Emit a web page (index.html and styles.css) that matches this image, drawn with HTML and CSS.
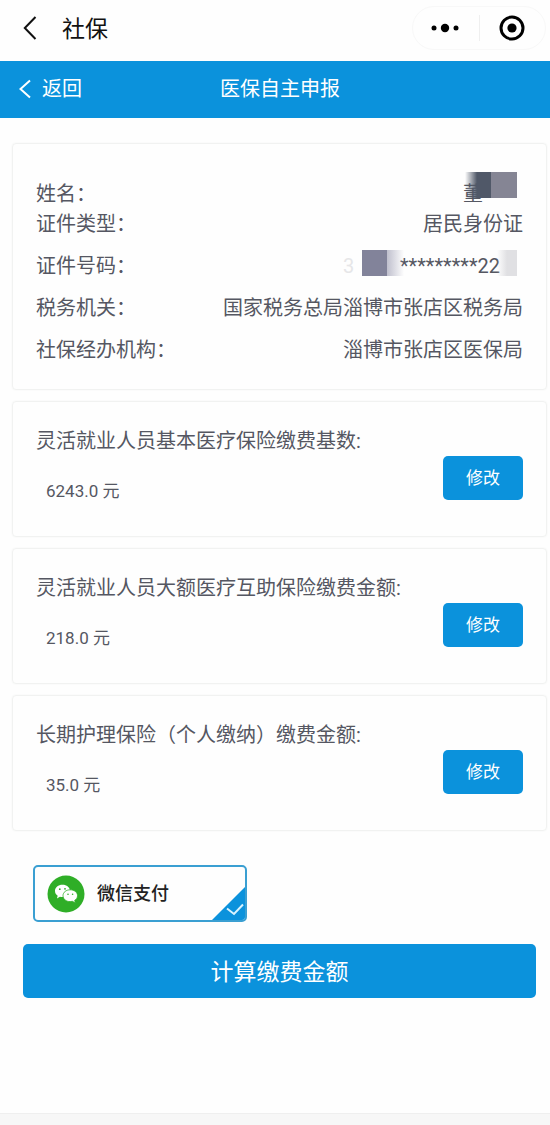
FILE: index.html
```html
<!DOCTYPE html>
<html lang="zh-CN">
<head>
    <meta charset="UTF-8">
    <meta name="viewport" content="width=device-width, initial-scale=1.0">
    <title>医保自主申报</title>
    <link rel="stylesheet" href="styles.css">
</head>
<body>
    <header class="app-bar">
        <button type="button" class="app-back" aria-label="关闭">
            <svg width="14" height="24" viewBox="0 0 14 24"><path d="M12.500 1 L1.800 12 L12.500 23" /></svg>
        </button>
        <h1>社保</h1>
        <div class="capsule">
            <button type="button" aria-label="更多">
                <svg width="28" height="10" viewBox="0 0 28 10">
                    <circle cx="3" cy="5" r="2.500" /><circle cx="14" cy="5" r="4.200" /><circle cx="25" cy="5" r="2.500" />
                </svg>
            </button>
            <span class="capsule-line"></span>
            <button type="button" aria-label="退出">
                <svg width="26" height="26" viewBox="0 0 26 26">
                    <circle class="ring" cx="13" cy="13" r="11" /><circle cx="13" cy="13" r="4.600" />
                </svg>
            </button>
        </div>
    </header>

    <nav class="nav-bar">
        <a href="#" class="nav-back">
            <svg width="12" height="20" viewBox="0 0 12 20"><path d="M11 1.500 L1.500 10 L11 18.500" /></svg>
            返回
        </a>
        <h2>医保自主申报</h2>
    </nav>

    <main>
        <dl class="card info">
            <div class="info-row name-row">
                <dt>姓名：</dt>
                <dd class="masked-name">
                    <span>董</span>
                    <span class="mask mask-name"></span>
                </dd>
            </div>
            <div class="info-row">
                <dt>证件类型：</dt>
                <dd>居民身份证</dd>
            </div>
            <div class="info-row">
                <dt>证件号码：</dt>
                <dd class="masked-id">
                    <span class="faint">3</span>
                    <span>*********22</span>
                    <span class="mask mask-start"></span>
                    <span class="mask mask-end"></span>
                </dd>
            </div>
            <div class="info-row">
                <dt>税务机关：</dt>
                <dd>国家税务总局淄博市张店区税务局</dd>
            </div>
            <div class="info-row">
                <dt>社保经办机构：</dt>
                <dd>淄博市张店区医保局</dd>
            </div>
        </dl>

        <section class="card fee">
            <h3>灵活就业人员基本医疗保险缴费基数:</h3>
            <div class="fee-row">
                <p>6243.0 元</p>
                <button type="button" class="btn edit">修改</button>
            </div>
        </section>

        <section class="card fee">
            <h3>灵活就业人员大额医疗互助保险缴费金额:</h3>
            <div class="fee-row">
                <p>218.0 元</p>
                <button type="button" class="btn edit">修改</button>
            </div>
        </section>

        <section class="card fee">
            <h3>长期护理保险（个人缴纳）缴费金额:</h3>
            <div class="fee-row">
                <p>35.0 元</p>
                <button type="button" class="btn edit">修改</button>
            </div>
        </section>

        <form class="pay">
            <label class="pay-option">
                <input type="radio" name="pay" value="wechat" checked>
                <svg class="wechat" width="38" height="38" viewBox="0 0 38 38">
                    <circle cx="19" cy="19" r="18.500" fill="#2fae27" />
                    <path fill="#fff" d="M15.500 9.800c-4.300 0-7.500 2.700-7.500 6.100 0 2 1 3.600 2.700 4.800l-.8 2.700 3-1.600c.9.200 1.700.3 2.600.3 4.200 0 7.500-2.700 7.500-6.200s-3.300-6.100-7.500-6.100z" />
                    <path fill="#fff" stroke="#2fae27" stroke-width=".8" d="M23.200 14.800c-4.100 0-7.200 2.500-7.200 5.900s3.100 5.900 7.200 5.900c.8 0 1.500-.1 2.200-.3l2.900 1.600-.6-2.600c1.800-1.100 2.800-2.600 2.800-4.600 0-3.400-3.200-5.900-7.300-5.900z" />
                    <g fill="#2fae27">
                        <circle cx="12.800" cy="14.200" r=".9" /><circle cx="18" cy="13.800" r=".9" />
                        <circle cx="21" cy="19.200" r=".8" /><circle cx="25.600" cy="19.200" r=".8" />
                    </g>
                </svg>
                <span>微信支付</span>
                <svg class="tick" width="33" height="33" viewBox="0 0 33 33">
                    <path fill="#0b92dc" d="M33 0V33H0z" />
                    <path fill="none" stroke="#d8f3ff" stroke-width="2" d="M15 21.500l7 5.500 9-9.500" />
                </svg>
            </label>
            <button type="button" class="btn submit">计算缴费金额</button>
        </form>
    </main>

    <footer class="bottom-bar"></footer>
</body>
</html>
```

FILE: styles.css
```css
* {
    box-sizing: border-box;
}
body {
    display: flex;
    flex-direction: column;
    min-height: 100vh;
    margin: 0;
    background: #fefefe;
    color: #555762;
    font-family: Roboto, "Noto Sans CJK SC", sans-serif;
    font-size: 20px;
    line-height: 30px;
}
h1, h2, h3, p, dl, dd {
    margin: 0;
    font-weight: normal;
}
button {
    padding: 0;
    border: none;
    background: none;
    font-family: inherit;
    cursor: pointer;
}
svg {
    display: block;
}

/* top bar */
.app-bar {
    display: flex;
    align-items: center;
    height: 61px;
    padding: 0 4px 6px 23px;
    color: #111;
}
.app-back path {
    fill: none;
    stroke: #111;
    stroke-width: 2;
}
.app-bar h1 {
    margin-left: 25px;
    padding-top: 4px;
    font-size: 23px;
}
.capsule {
    display: flex;
    align-items: center;
    justify-content: space-between;
    width: 134px;
    height: 44px;
    margin-left: auto;
    padding: 0 20px 0 18px;
    border: 1px solid #f8f8f8;
    border-radius: 22px;
}
.capsule .ring {
    fill: none;
    stroke: #000;
    stroke-width: 3;
}
.capsule-line {
    width: 1px;
    height: 26px;
    background: #efefef;
}

/* blue bar */
.nav-bar {
    display: grid;
    grid-template-columns: 1fr auto 1fr;
    align-items: center;
    height: 57px;
    padding: 0 9px 2px 19px;
    background: #0b92dc;
    color: #fff;
}
.nav-back {
    display: flex;
    align-items: center;
    gap: 11px;
    color: inherit;
    text-decoration: none;
}
.nav-back path {
    fill: none;
    stroke: #fff;
    stroke-width: 2;
}
.nav-bar h2 {
    font-size: 20px;
}

/* cards */
main {
    padding-top: 25px;
}
.card {
    margin: 0 3px 11px 12px;
    border: 1px solid #f1f2f1;
    border-radius: 4px;
    box-shadow: 0 0 2px #f3f4f3;
}
.info {
    padding: 35px 23px 24px;
}
.info-row {
    display: flex;
    justify-content: space-between;
    margin-bottom: 12px;
}
.info-row.name-row,
.info-row:last-child {
    margin-bottom: 0;
}

/* hidden personal data, blocks lie over the text */
.masked-name,
.masked-id {
    position: relative;
    display: flex;
}
.masked-name {
    width: 60px;
}
.masked-id {
    justify-content: space-between;
    width: 180px;
    padding-right: 23px;
}
.faint {
    color: #e6e6e8;
}
.mask {
    position: absolute;
    height: 26px;
}
.mask-name {
    top: -7px;
    right: 6px;
    width: 52px;
    background: linear-gradient(to right, transparent, #505868 12px, #505868 26px, #858594 26px);
}
.mask-start {
    top: -1px;
    left: 19px;
    width: 42px;
    background: linear-gradient(to right, #82839a 25px, #bfbfcd 25px, transparent);
}
.mask-end {
    top: -1px;
    right: 6px;
    width: 20px;
    background: linear-gradient(to right, transparent, #e0e0e3 10px);
}

/* fees */
.fee {
    padding: 24px 23px 30px;
}
.fee h3 {
    font-size: 20px;
}
.fee-row {
    display: flex;
    justify-content: space-between;
    align-items: flex-start;
}
.fee-row p {
    margin: 20px 0 0 10px;
    font-size: 17px;
}
.btn {
    border-radius: 5px;
    background: #0b92dc;
    color: #fff;
}
.btn:hover {
    background: #0a86ca;
}
.edit {
    width: 80px;
    height: 44px;
    padding-bottom: 4px;
    font-size: 17px;
}

/* payment */
.pay {
    padding: 23px 14px 0 23px;
}
.pay-option {
    position: relative;
    display: flex;
    align-items: center;
    gap: 12px;
    width: 214px;
    height: 57px;
    margin: 0 10px 22px;
    padding-left: 12px;
    border: 2px solid #3a9fd2;
    border-radius: 5px;
    overflow: hidden;
    color: #222;
    font-size: 18px;
    font-weight: 500;
    cursor: pointer;
}
.pay-option input {
    position: absolute;
    opacity: 0;
}
.tick {
    position: absolute;
    right: 0;
    bottom: 0;
}
.submit {
    width: 100%;
    height: 54px;
    padding-bottom: 2px;
    font-size: 23px;
}

.bottom-bar {
    height: 12px;
    margin-top: auto;
    border-top: 1px solid #efefef;
    background: #f7f7f7;
}
```
